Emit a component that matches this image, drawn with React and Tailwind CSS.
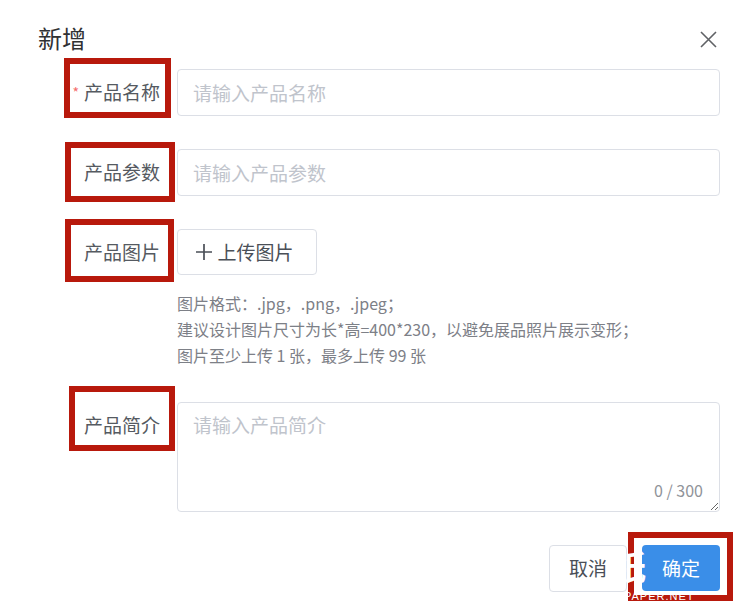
import React from 'react';

const FONT = { fontFamily: '"Noto Sans CJK SC", "Noto Sans", sans-serif' };

const LabelBox = ({ children, required, className }) => (
  <div className={`flex shrink-0 items-center justify-end border-[6px] border-[#b8190c] ${className}`}>
    {required && <span className="mr-[5px] text-[14px] leading-none text-[#f56c6c]">*</span>}
    <span className="text-[19px] leading-[24px] text-[#555a61]">{children}</span>
  </div>
);

const App = () => {
  return (
    <div className="relative h-[616px] w-[750px] overflow-hidden bg-white" style={FONT}>
      {/* Header */}
      <div className="flex items-start pl-[38px] pr-[33px] pt-[26px]">
        <h2 className="flex-1 text-[24px] leading-[24px] text-[#303133]">新增</h2>
        <svg width="17" height="17" viewBox="0 0 17 17" className="mt-[5px] text-[#606266]" fill="none" stroke="currentColor" strokeWidth="1.6">
          <path d="M1 1 L16 16 M16 1 L1 16" />
        </svg>
      </div>

      {/* Product name */}
      <div className="mt-[8px] flex">
        <div className="w-[177px] shrink-0 pl-[64px]">
          <LabelBox required className="h-[60px] w-[107px] pr-[5px] pt-[8px]">产品名称</LabelBox>
        </div>
        <input
          className="mt-[11px] h-[47px] w-[543px] rounded-[4px] border border-[#dcdfe6] px-[15px] text-[19px] text-[#606266] outline-none placeholder:text-[#c0c4cc]"
          placeholder="请输入产品名称"
        />
      </div>

      {/* Product params */}
      <div className="mt-[24px] flex">
        <div className="w-[177px] shrink-0 pl-[65px]">
          <LabelBox className="h-[60px] w-[110px] pr-[9px]">产品参数</LabelBox>
        </div>
        <input
          className="mt-[7px] h-[47px] w-[543px] rounded-[4px] border border-[#dcdfe6] px-[15px] text-[19px] text-[#606266] outline-none placeholder:text-[#c0c4cc]"
          placeholder="请输入产品参数"
        />
      </div>

      {/* Product image */}
      <div className="mt-[17px] flex">
        <div className="w-[177px] shrink-0 pl-[65px]">
          <LabelBox className="h-[63px] w-[109px] pr-[8px] pt-[2px]">产品图片</LabelBox>
        </div>
        <div className="pt-[10px]">
          <button className="flex h-[46px] w-[140px] items-center justify-center gap-[5px] rounded-[4px] border border-[#dcdfe6] bg-white pr-[4px] text-[19px] text-[#4a4f57]">
            <svg width="16" height="16" viewBox="0 0 16 16" fill="none" stroke="currentColor" strokeWidth="1.7">
              <path d="M8 0 V16 M0 8 H16" />
            </svg>
            上传图片
          </button>
          <div className="mt-[15px] text-[16px] leading-[26px] text-[#7d8087]">
            <p>图片格式：.jpg，.png，.jpeg；</p>
            <p>建议设计图片尺寸为长*高=400*230，以避免展品照片展示变形；</p>
            <p>图片至少上传 1 张，最多上传 99 张</p>
          </div>
        </div>
      </div>

      {/* Product intro */}
      <div className="mt-[18px] flex">
        <div className="w-[177px] shrink-0 pl-[69px]">
          <LabelBox className="h-[65px] w-[106px] pr-[9px] pt-[13px]">产品简介</LabelBox>
        </div>
        <div className="relative mt-[16px]">
          <textarea
            className="block h-[110px] w-[543px] rounded-[4px] border border-[#dcdfe6] px-[15px] py-[10px] text-[19px] leading-[24px] text-[#606266] outline-none placeholder:text-[#c0c4cc]"
            placeholder="请输入产品简介"
          />
          <span className="absolute bottom-[12px] right-[17px] text-[16px] leading-[20px] text-[#909399]">0 / 300</span>
        </div>
      </div>

      {/* Footer */}
      <div className="mt-[20px] flex items-start justify-end pr-[17px]">
        <button className="mt-[13px] h-[47px] w-[78px] rounded-[4px] border border-[#dcdfe6] bg-white text-[19px] text-[#4a4f57]">
          取消
        </button>
        <div className="ml-[1px] border-[6px] border-[#b8190c] pb-[4px] pl-[8px] pr-[7px] pt-[7px]">
          <button className="h-[46px] w-[78px] rounded-[4px] bg-[#3a8ee8] text-[19px] text-white">确定</button>
        </div>
      </div>

      {/* Watermark */}
      <div className="pointer-events-none absolute left-[612px] top-[546px] text-[34px] font-bold leading-[40px] text-white">纸</div>
      <div className="pointer-events-none absolute left-[624px] top-[590px] text-[11px] leading-[12px] tracking-[1px] text-white" style={{ fontFamily: '"Liberation Sans", sans-serif' }}>
        PAPER.NET
      </div>
    </div>
  );
};

export default App;
